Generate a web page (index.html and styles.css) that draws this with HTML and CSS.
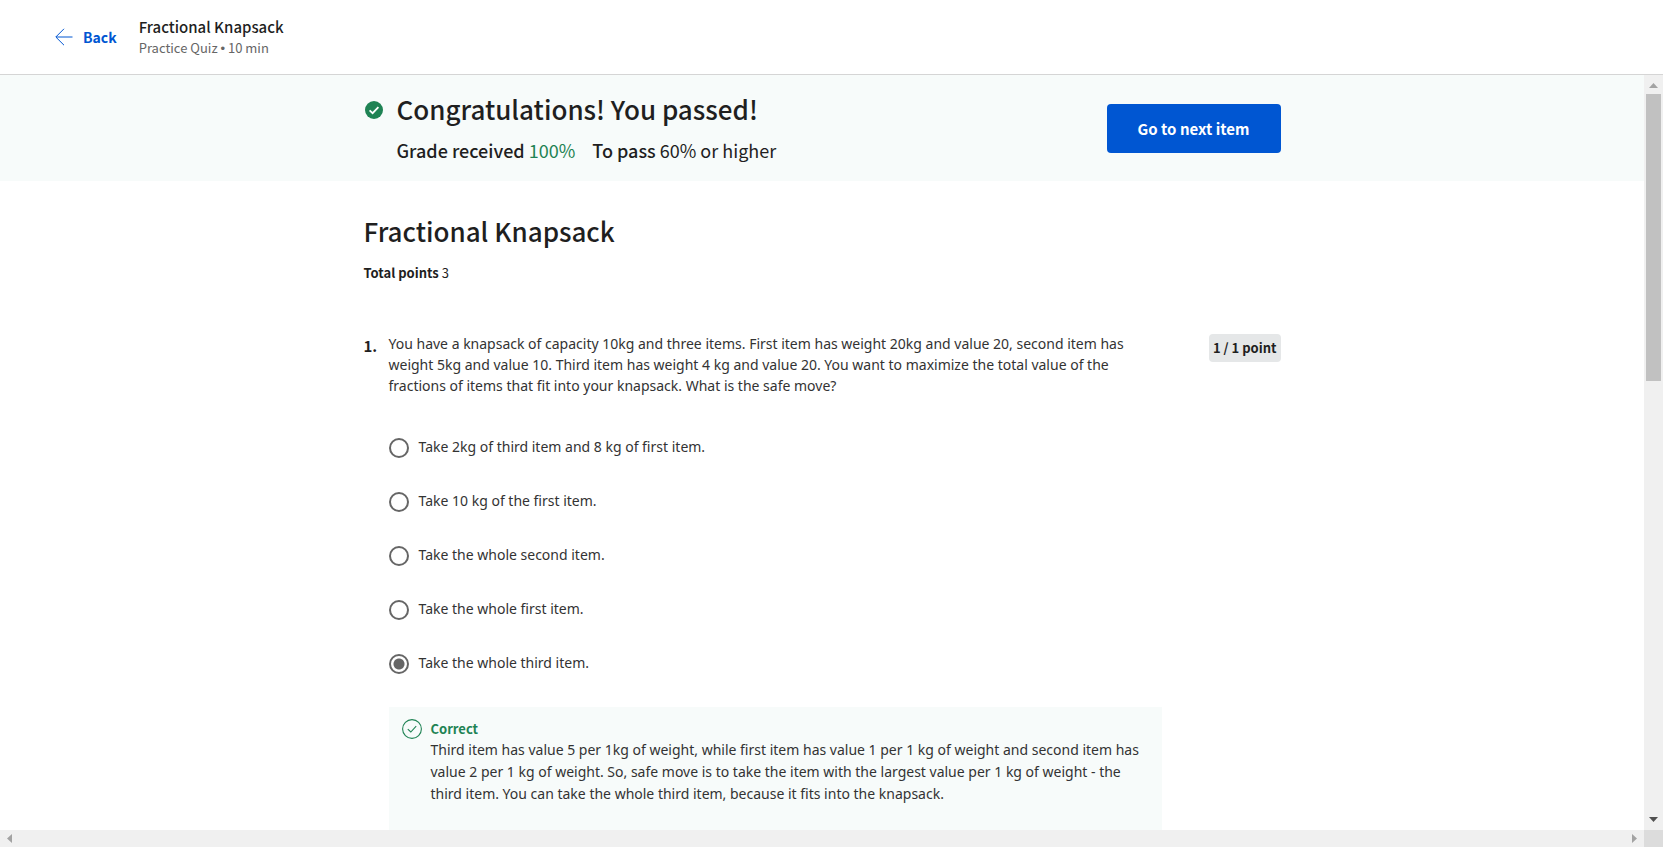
FILE: index.html
```html
<!DOCTYPE html>
<html lang="en">
<head>
<meta charset="utf-8">
<title>Fractional Knapsack</title>
<link rel="stylesheet" href="styles.css">
</head>
<body>
<header class="topbar">
  <a class="back" href="#">
    <svg width="18" height="18" viewBox="0 0 18 18" fill="none" stroke="currentColor" stroke-width="1"><path d="M17.5 9H1M9 .8L.8 9L9 17.2"/></svg>
    <span>Back</span>
  </a>
  <div class="heading">
    <div class="heading-title">Fractional Knapsack</div>
    <div class="heading-sub">Practice Quiz <span class="dot">•</span> 10 min</div>
  </div>
</header>
<div class="viewport">
  <main class="content">
    <section class="banner">
      <div class="column banner-row">
        <svg class="passed-icon" width="18" height="18" viewBox="0 0 18 18"><circle cx="9" cy="9" r="9" fill="#1f8354"/><path d="M4.6 9.4L7.6 12.2L13.4 6.2" fill="none" stroke="#fff" stroke-width="1.8"/></svg>
        <div class="result">
          <h1 class="title">Congratulations! You passed!</h1>
          <p class="grade"><span><b>Grade received</b> <span class="green">100%</span></span><span><b>To pass</b> 60% or higher</span></p>
        </div>
        <button class="next" type="button">Go to next item</button>
      </div>
    </section>
    <section class="column quiz">
      <h2 class="title">Fractional Knapsack</h2>
      <p class="total"><b>Total points</b> 3</p>
      <div class="question">
        <span class="number">1.</span>
        <form class="body">
          <p class="prompt" id="prompt">You have a knapsack of capacity 10kg and three items. First item has weight 20kg and value 20, second item has weight 5kg and value 10. Third item has weight 4 kg and value 20. You want to maximize the total value of the fractions of items that fit into your knapsack. What is the safe move?</p>
          <div class="options" role="radiogroup" aria-labelledby="prompt">
            <label class="option"><input type="radio" name="q1"><span>Take 2kg of third item and 8 kg of first item.</span></label>
            <label class="option"><input type="radio" name="q1"><span>Take 10 kg of the first item.</span></label>
            <label class="option"><input type="radio" name="q1"><span>Take the whole second item.</span></label>
            <label class="option"><input type="radio" name="q1"><span>Take the whole first item.</span></label>
            <label class="option"><input type="radio" name="q1" checked><span>Take the whole third item.</span></label>
          </div>
          <div class="feedback">
            <svg class="correct-icon" width="20" height="20" viewBox="0 0 20 20" fill="none" stroke="#1f8354"><circle cx="10" cy="10" r="9.4" stroke-width="1.1"/><path d="M5.8 10.2L8.8 13L14.2 7.2" stroke-width="1.1"/></svg>
            <div>
              <div class="verdict">Correct</div>
              <p class="explain">Third item has value 5 per 1kg of weight, while first item has value 1 per 1 kg of weight and second item has value 2 per 1 kg of weight. So, safe move is to take the item with the largest value per 1 kg of weight - the third item. You can take the whole third item, because it fits into the knapsack.</p>
            </div>
          </div>
        </form>
        <span class="points">1 / 1 point</span>
      </div>
    </section>
  </main>
  <div class="vbar" aria-hidden="true">
    <svg width="9" height="5" viewBox="0 0 9 5"><path d="M4.5 0L9 5H0z" fill="#a3a3a3"/></svg>
    <div class="track"><div class="thumb"></div></div>
    <svg width="9" height="5" viewBox="0 0 9 5"><path d="M4.5 5L9 0H0z" fill="#505050"/></svg>
  </div>
  <div class="hbar" aria-hidden="true">
    <svg width="5" height="9" viewBox="0 0 5 9"><path d="M0 4.5L5 0V9z" fill="#a3a3a3"/></svg>
    <svg width="5" height="9" viewBox="0 0 5 9"><path d="M5 4.5L0 0V9z" fill="#a3a3a3"/></svg>
  </div>
  <div class="corner"></div>
</div>
</body>
</html>
```
FILE: styles.css
```css
* { box-sizing: border-box; }
body {
  margin: 0;
  height: 100vh;
  display: flex;
  flex-direction: column;
  overflow: hidden;
  background: #fff;
  color: #1f1f1f;
  font-family: "Noto Sans CJK SC", "Noto Sans", sans-serif;
}
h1, h2, p { margin: 0; }
svg { flex: none; display: block; }

.topbar {
  flex: none;
  display: flex;
  align-items: center;
  gap: 22px;
  height: 75px;
  padding-left: 55px;
  border-bottom: 1px solid #d5d5d5;
}
.back {
  display: flex;
  align-items: center;
  gap: 10px;
  color: #0056d2;
  font-size: 14px;
  font-weight: 700;
  text-decoration: none;
}
.heading-title { font-size: 15px; line-height: 22px; font-weight: 500; }
.heading-sub { font-size: 13px; line-height: 20px; color: #666; }
.dot { font-family: "Liberation Sans", sans-serif; }

.viewport {
  flex: 1;
  min-height: 0;
  display: grid;
  grid-template-columns: 1fr 19px;
  grid-template-rows: minmax(0, 1fr) 17px;
}
.content { overflow: hidden; }
.column { width: 56%; max-width: 917px; margin: 0 auto; }

.banner { background: #f7fbfa; padding: 15px 0 17px; }
.banner-row { display: flex; align-items: flex-start; gap: 14px; padding-left: 1px; }
.passed-icon { margin-top: 11px; }
.result { flex: 1; }
.title { font-size: 26px; line-height: 38px; font-weight: 500; }
.grade { display: flex; gap: 17px; margin-top: 8px; font-size: 18px; line-height: 28px; }
.grade b { font-weight: 500; }
.green { color: #1f8354; }
.next {
  width: 174px;
  height: 49px;
  margin-top: 14px;
  border: 0;
  border-radius: 4px;
  background: #0056d2;
  color: #fff;
  font: 700 15px "Noto Sans CJK SC", sans-serif;
}

.quiz { padding-top: 31px; }
.total { margin-top: 13px; font-size: 13px; line-height: 20px; }
.question { display: flex; align-items: flex-start; margin-top: 50px; }
.number { width: 25px; padding-top: 2px; font-size: 15px; line-height: 22px; font-weight: 700; }
.body { width: 773px; color: #333; font: 14px/22px "Noto Sans", sans-serif; }
.prompt { padding-right: 16px; line-height: 21px; }
.options { margin-top: 24px; }
.option { display: flex; align-items: center; gap: 10px; height: 54px; }
.option input {
  appearance: none;
  width: 20px;
  height: 20px;
  margin: 2px 0 0;
  border: 2px solid #666;
  border-radius: 50%;
  background: #fff;
}
.option input:checked { background: radial-gradient(circle, #666 5px, #fff 6px); }
.feedback { display: flex; gap: 9px; margin-top: 17px; padding: 12px 12px 40px 13px; background: #f7fbfa; }
.verdict { color: #1f8354; font: 700 13px/20px "Noto Sans CJK SC", sans-serif; }
.points {
  margin-top: 1px;
  margin-left: auto;
  padding: 0 4px;
  border-radius: 4px;
  background: #e5e7e8;
  font-size: 13px;
  line-height: 28px;
  font-weight: 700;
}

.vbar { display: flex; flex-direction: column; align-items: center; padding: 8px 0; background: #f0f0f0; }
.track { flex: 1; width: 15px; padding: 6px 0; }
.thumb { height: 40%; background: #c1c1c1; }
.hbar { display: flex; justify-content: space-between; align-items: center; padding: 0 7px; background: #f0f0f0; }
.corner { background: #dcdcdc; }
```
